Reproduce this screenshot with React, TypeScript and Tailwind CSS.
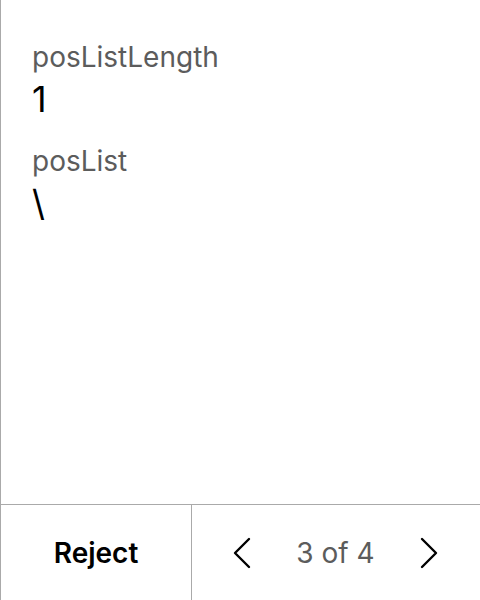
import React from 'react';

function Field({ label, value }: { label: string; value: string }) {
  return (
    <div className="flex flex-col">
      <span className="text-[28px] leading-[36px] text-[#5c5c5c]">{label}</span>
      <span className="text-[36px] leading-[48px] text-black">{value}</span>
    </div>
  );
}

function Chevron({ dir }: { dir: 'left' | 'right' }) {
  return (
    <svg width="20" height="34" viewBox="0 0 20 34" fill="none" stroke="black" strokeWidth="2.4" strokeLinecap="round" strokeLinejoin="round">
      {dir === 'left' ? <path d="M17 3 L3 17 L17 31" /> : <path d="M3 3 L17 17 L3 31" />}
    </svg>
  );
}

export default function App() {
  return (
    <div className="flex h-[600px] w-[480px] flex-col border-l border-[#aaaaaa] bg-white" style={{ fontFamily: 'Inter, "Noto Sans", sans-serif' }}>
      {/* Fields */}
      <div className="flex flex-1 flex-col gap-[20px] px-[31px] pt-[39px]">
        <Field label="posListLength" value="1" />
        <Field label="posList" value="\" />
      </div>

      {/* Footer */}
      <div className="flex h-[96px] border-t border-[#aaaaaa]">
        <button className="flex w-[191px] items-center justify-center border-r border-[#aaaaaa] text-[28px] font-semibold text-black">
          Reject
        </button>
        <div className="flex flex-1 items-center justify-between pl-[40px] pr-[41px]">
          <button className="flex items-center">
            <Chevron dir="left" />
          </button>
          <span className="text-[28px] text-[#5c5c5c]">3 of 4</span>
          <button className="flex items-center">
            <Chevron dir="right" />
          </button>
        </div>
      </div>
    </div>
  );
}
